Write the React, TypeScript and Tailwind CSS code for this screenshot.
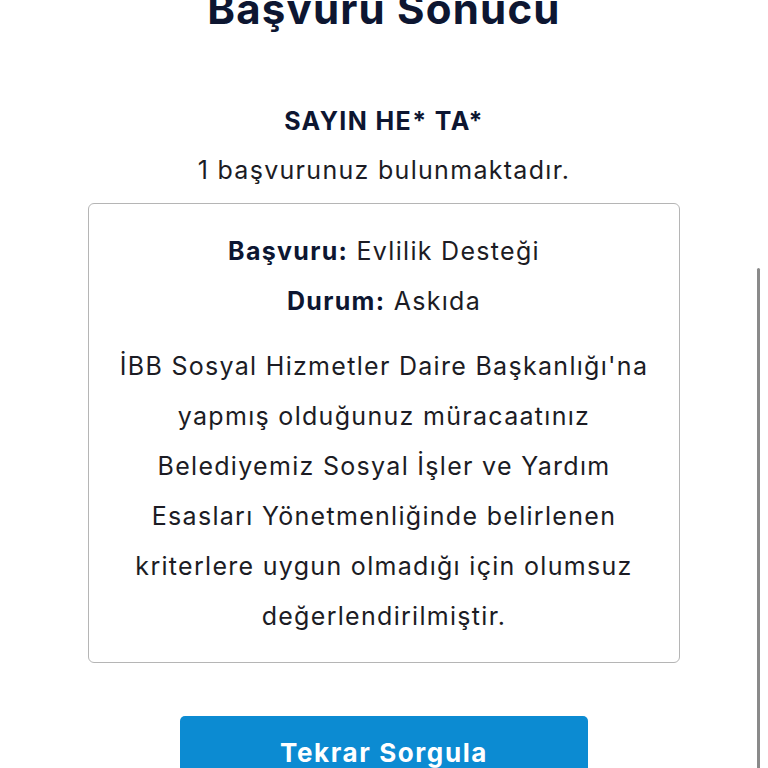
import React from 'react';

const lines = [
  "İBB Sosyal Hizmetler Daire Başkanlığı'na",
  'yapmış olduğunuz müracaatınız',
  'Belediyemiz Sosyal İşler ve Yardım',
  'Esasları Yönetmenliğinde belirlenen',
  'kriterlere uygun olmadığı için olumsuz',
  'değerlendirilmiştir.',
];

export default function App() {
  return (
    <div className="relative h-[768px] overflow-hidden bg-white font-['Inter',sans-serif] text-[#1c1c24]">
      <div className="mx-auto flex w-[592px] flex-col items-center">
        <h1 className="mt-[-15px] text-[42px] font-bold leading-[48px] tracking-[1.2px] text-[#0d1631]">
          Başvuru Sonucu
        </h1>

        <p className="mt-[72px] text-[25px] font-bold leading-[32px] tracking-[1.4px] text-[#0d1631]">
          SAYIN HE* TA*
        </p>
        <p className="mt-[17px] text-[25px] leading-[32px] tracking-[1.3px]">
          1 başvurunuz bulunmaktadır.
        </p>

        <div className="mt-[17px] w-full rounded-md border border-[#b5b5b5] pb-[21px] pt-[22px] text-center text-[25px] leading-[50px] tracking-[1.3px]">
          <p>
            <span className="font-bold text-[#0d1631]">Başvuru:</span> Evlilik Desteği
          </p>
          <p>
            <span className="font-bold text-[#0d1631]">Durum:</span> Askıda
          </p>
          <p className="mt-[15px]">
            {lines.map((l, i) => (
              <React.Fragment key={i}>
                {l}
                {i < lines.length - 1 && <br />}
              </React.Fragment>
            ))}
          </p>
        </div>

        <button className="mt-[53px] h-[72px] w-[408px] rounded-[5px] bg-[#0c8bd2] text-[26px] font-bold tracking-[1.6px] text-white">
          Tekrar Sorgula
        </button>
      </div>

      {/* scrollbar */}
      <div className="absolute right-[8px] top-[268px] h-[520px] w-[3px] rounded-full bg-[#8a8a8a]" />
    </div>
  );
}
